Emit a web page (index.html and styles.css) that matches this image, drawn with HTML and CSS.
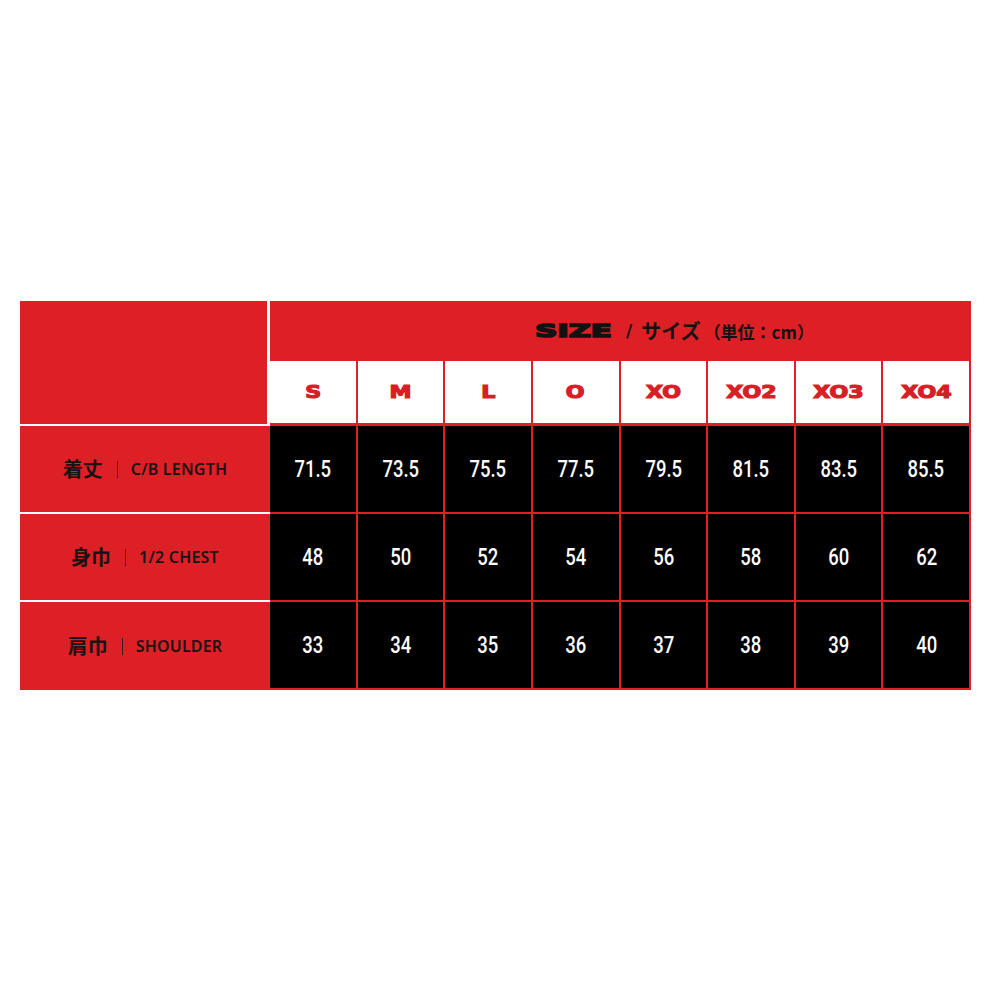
FILE: index.html
```html
<!DOCTYPE html>
<html lang="ja">
<head>
<meta charset="utf-8">
<title>Size chart</title>
<link rel="stylesheet" href="styles.css">
</head>
<body>
<div class="chart">
  <div class="corner"></div>
  <div class="head">
    <span class="size-word"><span>SIZE</span></span>
    <span class="slash">/</span>
    <span class="jp">サイズ</span>
    <span class="unit">（単位：cm）</span>
  </div>

  <div class="sz"><span>S</span></div>
  <div class="sz"><span>M</span></div>
  <div class="sz"><span>L</span></div>
  <div class="sz"><span>O</span></div>
  <div class="sz"><span>XO</span></div>
  <div class="sz"><span>XO2</span></div>
  <div class="sz"><span>XO3</span></div>
  <div class="sz"><span>XO4</span></div>

  <div class="label"><span class="ja">着丈</span><span class="bar"></span><span class="en">C/B LENGTH</span></div>
  <div class="num"><span>71.5</span></div>
  <div class="num"><span>73.5</span></div>
  <div class="num"><span>75.5</span></div>
  <div class="num"><span>77.5</span></div>
  <div class="num"><span>79.5</span></div>
  <div class="num"><span>81.5</span></div>
  <div class="num"><span>83.5</span></div>
  <div class="num"><span>85.5</span></div>

  <div class="label"><span class="ja">身巾</span><span class="bar"></span><span class="en">1/2 CHEST</span></div>
  <div class="num"><span>48</span></div>
  <div class="num"><span>50</span></div>
  <div class="num"><span>52</span></div>
  <div class="num"><span>54</span></div>
  <div class="num"><span>56</span></div>
  <div class="num"><span>58</span></div>
  <div class="num"><span>60</span></div>
  <div class="num"><span>62</span></div>

  <div class="label last"><span class="ja">肩巾</span><span class="bar"></span><span class="en">SHOULDER</span></div>
  <div class="num"><span>33</span></div>
  <div class="num"><span>34</span></div>
  <div class="num"><span>35</span></div>
  <div class="num"><span>36</span></div>
  <div class="num"><span>37</span></div>
  <div class="num"><span>38</span></div>
  <div class="num"><span>39</span></div>
  <div class="num"><span>40</span></div>
</div>
</body>
</html>
```

FILE: styles.css
```css
html, body {
  margin: 0;
  padding: 0;
  background: #ffffff;
}

body {
  font-family: "Noto Sans", "Noto Sans CJK JP", sans-serif;
}

.chart {
  margin: 301px 0 0 20px;
  width: 951px;
  display: grid;
  grid-template-columns: 250px repeat(8, 1fr);
  grid-template-rows: 60px 65px 88px 88px 88px;
}

.corner {
  grid-column: 1;
  grid-row: 1 / 3;
  background: #dd1f26;
  border-right: 3px solid #ffffff;
  border-bottom: 2px solid #ffffff;
}

.head {
  grid-column: 2 / -1;
  grid-row: 1;
  background: #dd1f26;
  display: flex;
  align-items: center;
  padding-left: 264px;
  color: #121212;
}

.size-word {
  display: inline-block;
  width: 80px;
  text-align: center;
  font-family: "DejaVu Sans", sans-serif;
  font-weight: 700;
  font-size: 18px;
  line-height: 1;
  -webkit-text-stroke: 1.6px #121212;
}

.size-word span {
  display: inline-block;
  transform: scaleX(1.7);
}

.slash {
  margin-left: 12px;
  font-family: "DejaVu Sans", sans-serif;
  font-weight: 700;
  font-size: 17px;
  line-height: 1;
}

.jp {
  margin-left: 9px;
  font-family: "Noto Sans CJK JP", sans-serif;
  font-weight: 700;
  font-size: 20px;
  line-height: 1;
}

.unit {
  margin-left: 3px;
  font-family: "Noto Sans CJK JP", sans-serif;
  font-weight: 700;
  font-size: 17px;
  line-height: 1;
}

.sz {
  background: #ffffff;
  border-right: 2px solid #dd1f26;
  border-bottom: 3px solid #dd1f26;
  display: flex;
  align-items: center;
  justify-content: center;
  color: #d81f27;
  font-family: "DejaVu Sans", sans-serif;
  font-weight: 700;
  font-size: 17px;
  line-height: 1;
  -webkit-text-stroke: 1.2px #d81f27;
}

.sz span {
  display: inline-block;
  transform: scaleX(1.3);
}

.label {
  background: #dd1f26;
  border-bottom: 2px solid #ffffff;
  display: flex;
  align-items: center;
  justify-content: center;
  color: #1a1212;
}

.label.last {
  border-bottom: none;
}

.label .ja {
  font-family: "Noto Sans CJK JP", sans-serif;
  font-weight: 700;
  font-size: 20px;
  line-height: 1;
}

.label .bar {
  display: inline-block;
  width: 0;
  height: 17px;
  border-left: 1.5px solid #3a1a1a;
  margin: 0 13px 0 14px;
}

.label .en {
  font-family: "Noto Sans", sans-serif;
  font-weight: 600;
  font-size: 16px;
  line-height: 1;
  letter-spacing: 0.2px;
}

.num {
  background: #000000;
  border-right: 2px solid #dd1f26;
  border-bottom: 2px solid #dd1f26;
  display: flex;
  align-items: center;
  justify-content: center;
  color: #ffffff;
  font-family: Roboto, sans-serif;
  font-weight: 500;
  font-size: 24px;
  line-height: 1;
}

.num span {
  display: inline-block;
  transform: scaleX(0.77);
}
```
